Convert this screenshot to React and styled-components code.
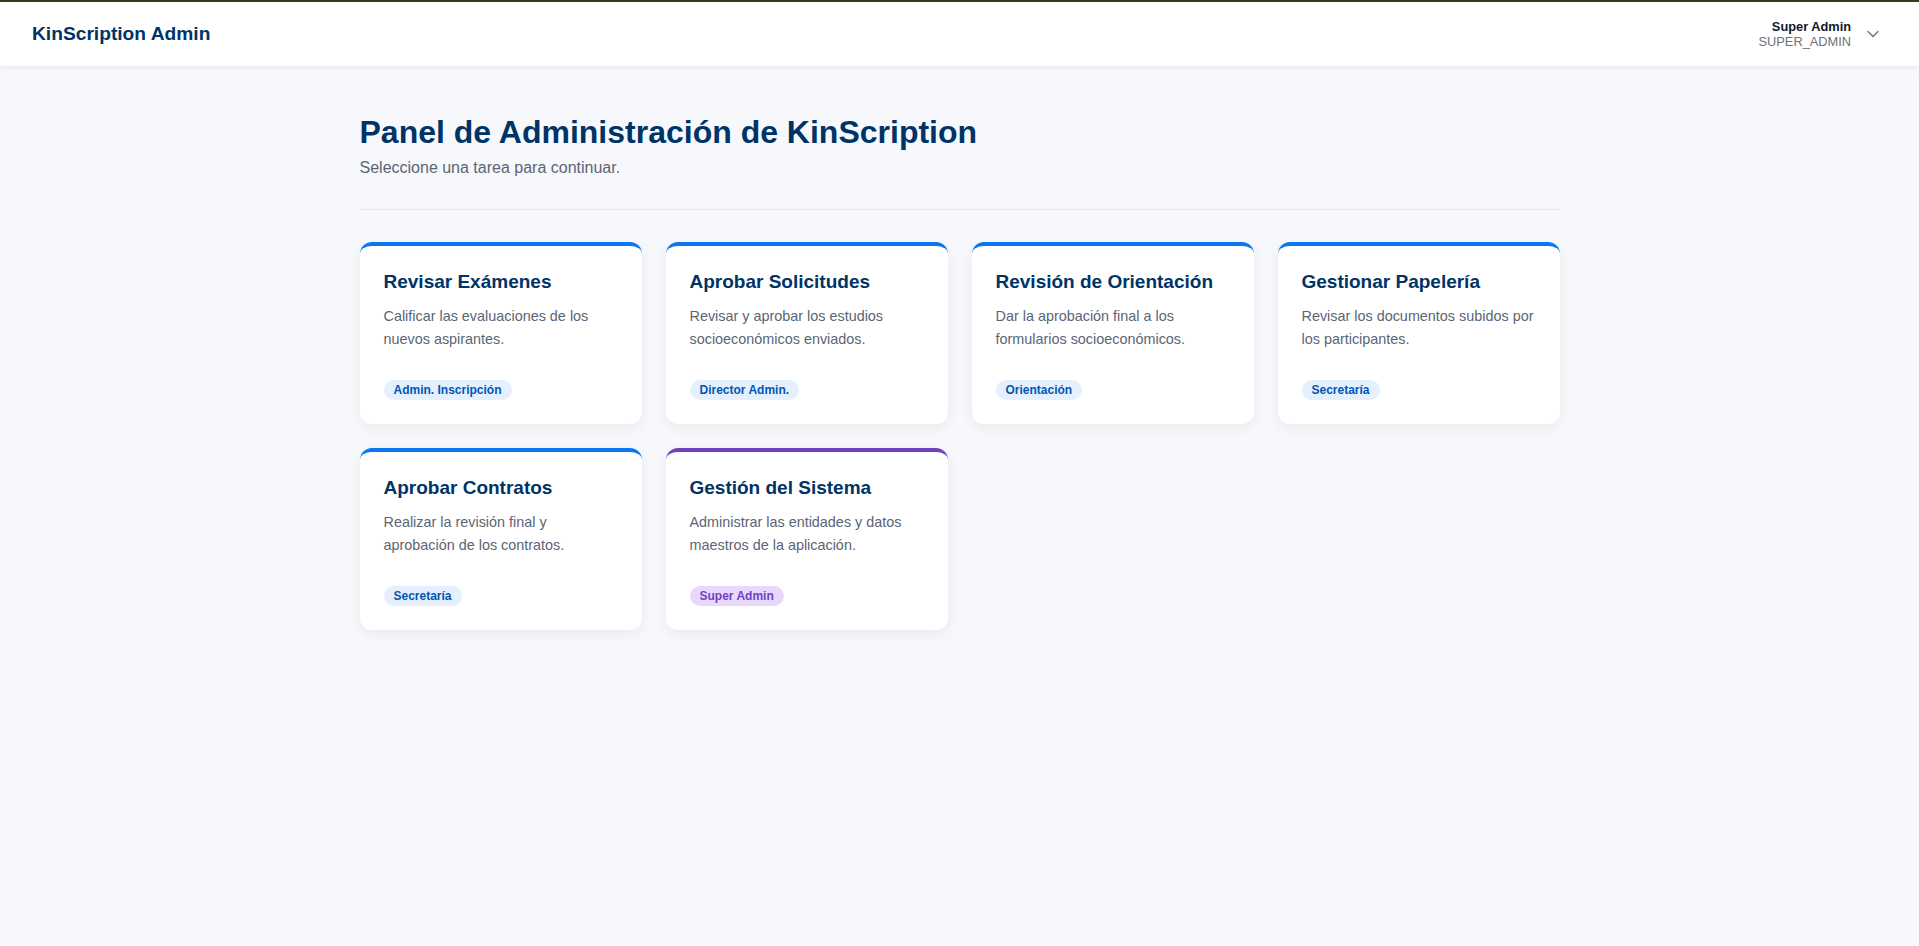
import React from "react";
import styled, { createGlobalStyle } from "styled-components";
import { ChevronDown } from "lucide-react";

const GlobalStyle = createGlobalStyle`
  * { box-sizing: border-box; }
  html, body { margin: 0; padding: 0; }
  body {
    background: #f6f8fb;
    font-family: "Liberation Sans", Arial, sans-serif;
    color: #1f2937;
  }
`;

const Page = styled.div`
  min-height: 946px;
  background: #f6f8fb;
`;

const Header = styled.header`
  height: 66px;
  border-top: 2px solid #3b3622;
  background: #ffffff;
  box-shadow: 0 2px 6px rgba(15, 23, 42, 0.06);
  display: flex;
  align-items: center;
  justify-content: space-between;
  padding: 0 32px;
`;

const Brand = styled.div`
  font-size: 19.2px;
  font-weight: 700;
  color: #003366;
`;

const UserArea = styled.div`
  display: flex;
  align-items: center;
  gap: 8px;
`;

const UserInfo = styled.div`
  display: flex;
  flex-direction: column;
  align-items: flex-end;
  line-height: 15px;
  font-size: 12.8px;
`;

const UserName = styled.span`
  font-weight: 700;
  color: #111827;
`;

const UserRole = styled.span`
  color: #6b7280;
`;

const MenuButton = styled.button`
  border: none;
  background: transparent;
  padding: 4px;
  display: flex;
  align-items: center;
  color: #6b7280;
  cursor: pointer;
`;

const Main = styled.main`
  max-width: 1200px;
  margin: 0 auto;
  padding: 48px 0;
`;

const Title = styled.h1`
  margin: 0;
  font-size: 32px;
  line-height: 37px;
  font-weight: 700;
  color: #003366;
`;

const Subtitle = styled.p`
  margin: 8px 0 0;
  font-size: 16px;
  line-height: 18px;
  color: #5b6575;
`;

const Divider = styled.hr`
  border: none;
  border-top: 1px solid #e2e8f0;
  margin: 32px 0 32px;
`;

const Grid = styled.div`
  display: grid;
  grid-template-columns: repeat(4, 1fr);
  gap: 24px;
`;

const Card = styled.div`
  background: #ffffff;
  border-radius: 12px;
  border-top: 4px solid ${(p) => p.$accent};
  box-shadow: 0 4px 14px rgba(15, 23, 42, 0.06);
  padding: 24px 24px 24px;
  display: flex;
  flex-direction: column;
  cursor: pointer;
`;

const CardTitle = styled.h2`
  margin: 0 0 12px;
  font-size: 19px;
  line-height: 23px;
  font-weight: 700;
  color: #003366;
`;

const CardText = styled.p`
  margin: 0 0 29px;
  font-size: 14.4px;
  line-height: 23px;
  color: #5b6575;
  flex: 1;
`;

const Badge = styled.span`
  align-self: flex-start;
  font-size: 12px;
  line-height: 14px;
  font-weight: 700;
  padding: 3px 10px;
  border-radius: 999px;
  background: ${(p) => p.$bg};
  color: ${(p) => p.$fg};
`;

const BLUE = { accent: "#0a76f2", bg: "#e5f0ff", fg: "#0056b3" };
const PURPLE = { accent: "#6f42c1", bg: "#e8d9fc", fg: "#6f42c1" };

const tasks = [
  { title: "Revisar Exámenes", text: "Calificar las evaluaciones de los nuevos aspirantes.", badge: "Admin. Inscripción", theme: BLUE },
  { title: "Aprobar Solicitudes", text: "Revisar y aprobar los estudios socioeconómicos enviados.", badge: "Director Admin.", theme: BLUE },
  { title: "Revisión de Orientación", text: "Dar la aprobación final a los formularios socioeconómicos.", badge: "Orientación", theme: BLUE },
  { title: "Gestionar Papelería", text: "Revisar los documentos subidos por los participantes.", badge: "Secretaría", theme: BLUE },
  { title: "Aprobar Contratos", text: "Realizar la revisión final y aprobación de los contratos.", badge: "Secretaría", theme: BLUE },
  { title: "Gestión del Sistema", text: "Administrar las entidades y datos maestros de la aplicación.", badge: "Super Admin", theme: PURPLE },
];

export default function App() {
  return (
    <Page>
      <GlobalStyle />
      <Header>
        <Brand>KinScription Admin</Brand>
        <UserArea>
          <UserInfo>
            <UserName>Super Admin</UserName>
            <UserRole>SUPER_ADMIN</UserRole>
          </UserInfo>
          <MenuButton aria-label="Menú de usuario">
            <ChevronDown size={20} strokeWidth={1.6} />
          </MenuButton>
        </UserArea>
      </Header>
      <Main>
        <Title>Panel de Administración de KinScription</Title>
        <Subtitle>Seleccione una tarea para continuar.</Subtitle>
        <Divider />
        <Grid>
          {tasks.map((t) => (
            <Card key={t.title} $accent={t.theme.accent}>
              <CardTitle>{t.title}</CardTitle>
              <CardText>{t.text}</CardText>
              <Badge $bg={t.theme.bg} $fg={t.theme.fg}>{t.badge}</Badge>
            </Card>
          ))}
        </Grid>
      </Main>
    </Page>
  );
}
